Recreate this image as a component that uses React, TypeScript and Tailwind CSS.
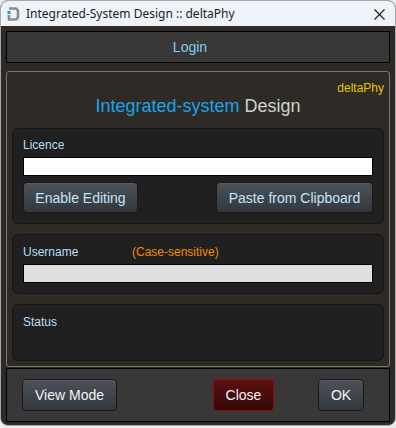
import React from "react";

const btn =
  "rounded-[4px] border border-[#1a1a1a] bg-gradient-to-b from-[#4d525a] to-[#33373e] text-[14px] leading-none shadow-[inset_0_1px_0_rgba(255,255,255,0.06)]";

function AppIcon() {
  return (
    <svg width="14" height="16" viewBox="0 0 14 16" className="shrink-0">
      <path
        d="M3 2.5 H9 A3 3 0 0 1 12 5.5 V10.5 A3 3 0 0 1 9 13.5 H3 V9"
        fill="none"
        stroke="#8c8c8c"
        strokeWidth="2.6"
      />
      <rect x="1.5" y="5" width="3" height="3" fill="#1e9be6" />
    </svg>
  );
}

function Card({ children, className = "" }: { children: React.ReactNode; className?: string }) {
  return (
    <div className={`rounded-[6px] border border-[#151515] bg-[#202020] px-[10px] ${className}`}>
      {children}
    </div>
  );
}

export default function App() {
  return (
    <div className="h-[428px] w-[396px] bg-[#ebebeb] font-['Liberation_Sans',Arial,sans-serif]">
      <div className="flex h-[426px] flex-col overflow-hidden rounded-[8px] border border-[#a9a9a9] bg-[#2e2b27]">
        {/* title bar */}
        <div className="flex h-[25px] shrink-0 items-center bg-[#eef3f9] pl-[5px] pr-[10px]">
          <AppIcon />
          <span className="ml-[6px] font-['Segoe_UI','Noto_Sans',sans-serif] text-[12px] text-[#1b1b1b]">
            Integrated-System Design :: deltaPhy
          </span>
          <svg width="11" height="11" viewBox="0 0 11 11" className="ml-auto mt-[1px]">
            <path d="M0.5 0.5 L10.5 10.5 M10.5 0.5 L0.5 10.5" stroke="#1b1b1b" strokeWidth="1.1" />
          </svg>
        </div>

        <div className="flex flex-1 flex-col px-[5px] pt-[5px]">
          {/* login bar */}
          <div className="flex h-[32px] shrink-0 items-center justify-center border border-black bg-[#383838] pr-[16px] text-[14px] text-[#8dc9ef]">
            Login
          </div>

          {/* main panel */}
          <div className="mt-[8px] flex h-[296px] flex-col rounded-[3px] border border-[#7b7873] px-[5px] pt-[10px]">
            <div className="text-right text-[12px] leading-[13px] text-[#e8c400]">deltaPhy</div>
            <h1 className="text-center text-[18px] leading-[22px]">
              <span className="text-[#1ba3e8]">Integrated-system</span>{" "}
              <span className="text-[#d0d0d0]">Design</span>
            </h1>

            <Card className="mt-[11px] pt-[9px] pb-[10px]">
              <div className="text-[12px] leading-[14px] text-[#b7dff6]">Licence</div>
              <div className="mt-[5px] h-[19px] border border-black bg-white" />
              <div className="mt-[6px] flex justify-between">
                <button className={`${btn} h-[31px] w-[115px] text-[#c3e5f9]`}>Enable Editing</button>
                <button className={`${btn} h-[31px] w-[157px] text-[#c3e5f9]`}>Paste from Clipboard</button>
              </div>
            </Card>

            <Card className="mt-[10px] pt-[10px] pb-[10px]">
              <div className="flex text-[12px] leading-[14px]">
                <span className="w-[109px] text-[#b7dff6]">Username</span>
                <span className="text-[#f08c00]">(Case-sensitive)</span>
              </div>
              <div className="mt-[5px] h-[19px] border border-black bg-[#dedede]" />
            </Card>

            <Card className="mt-[10px] h-[57px] pt-[10px]">
              <div className="text-[12px] leading-[14px] text-[#b7dff6]">Status</div>
            </Card>
          </div>

          {/* footer */}
          <div className="mt-[1px] flex h-[54px] shrink-0 items-center border border-black bg-[#383838] pl-[15px] pr-[25px]">
            <button className={`${btn} h-[32px] w-[95px] text-[#f4f4f4]`}>View Mode</button>
            <button className="ml-auto h-[32px] w-[61px] rounded-[4px] border border-[#8d0b0b] bg-gradient-to-b from-[#5c1111] to-[#360707] text-[14px] leading-none text-[#f4f4f4]">
              Close
            </button>
            <button className={`${btn} ml-[44px] h-[32px] w-[46px] text-[#f4f4f4]`}>OK</button>
          </div>
        </div>
      </div>
    </div>
  );
}
